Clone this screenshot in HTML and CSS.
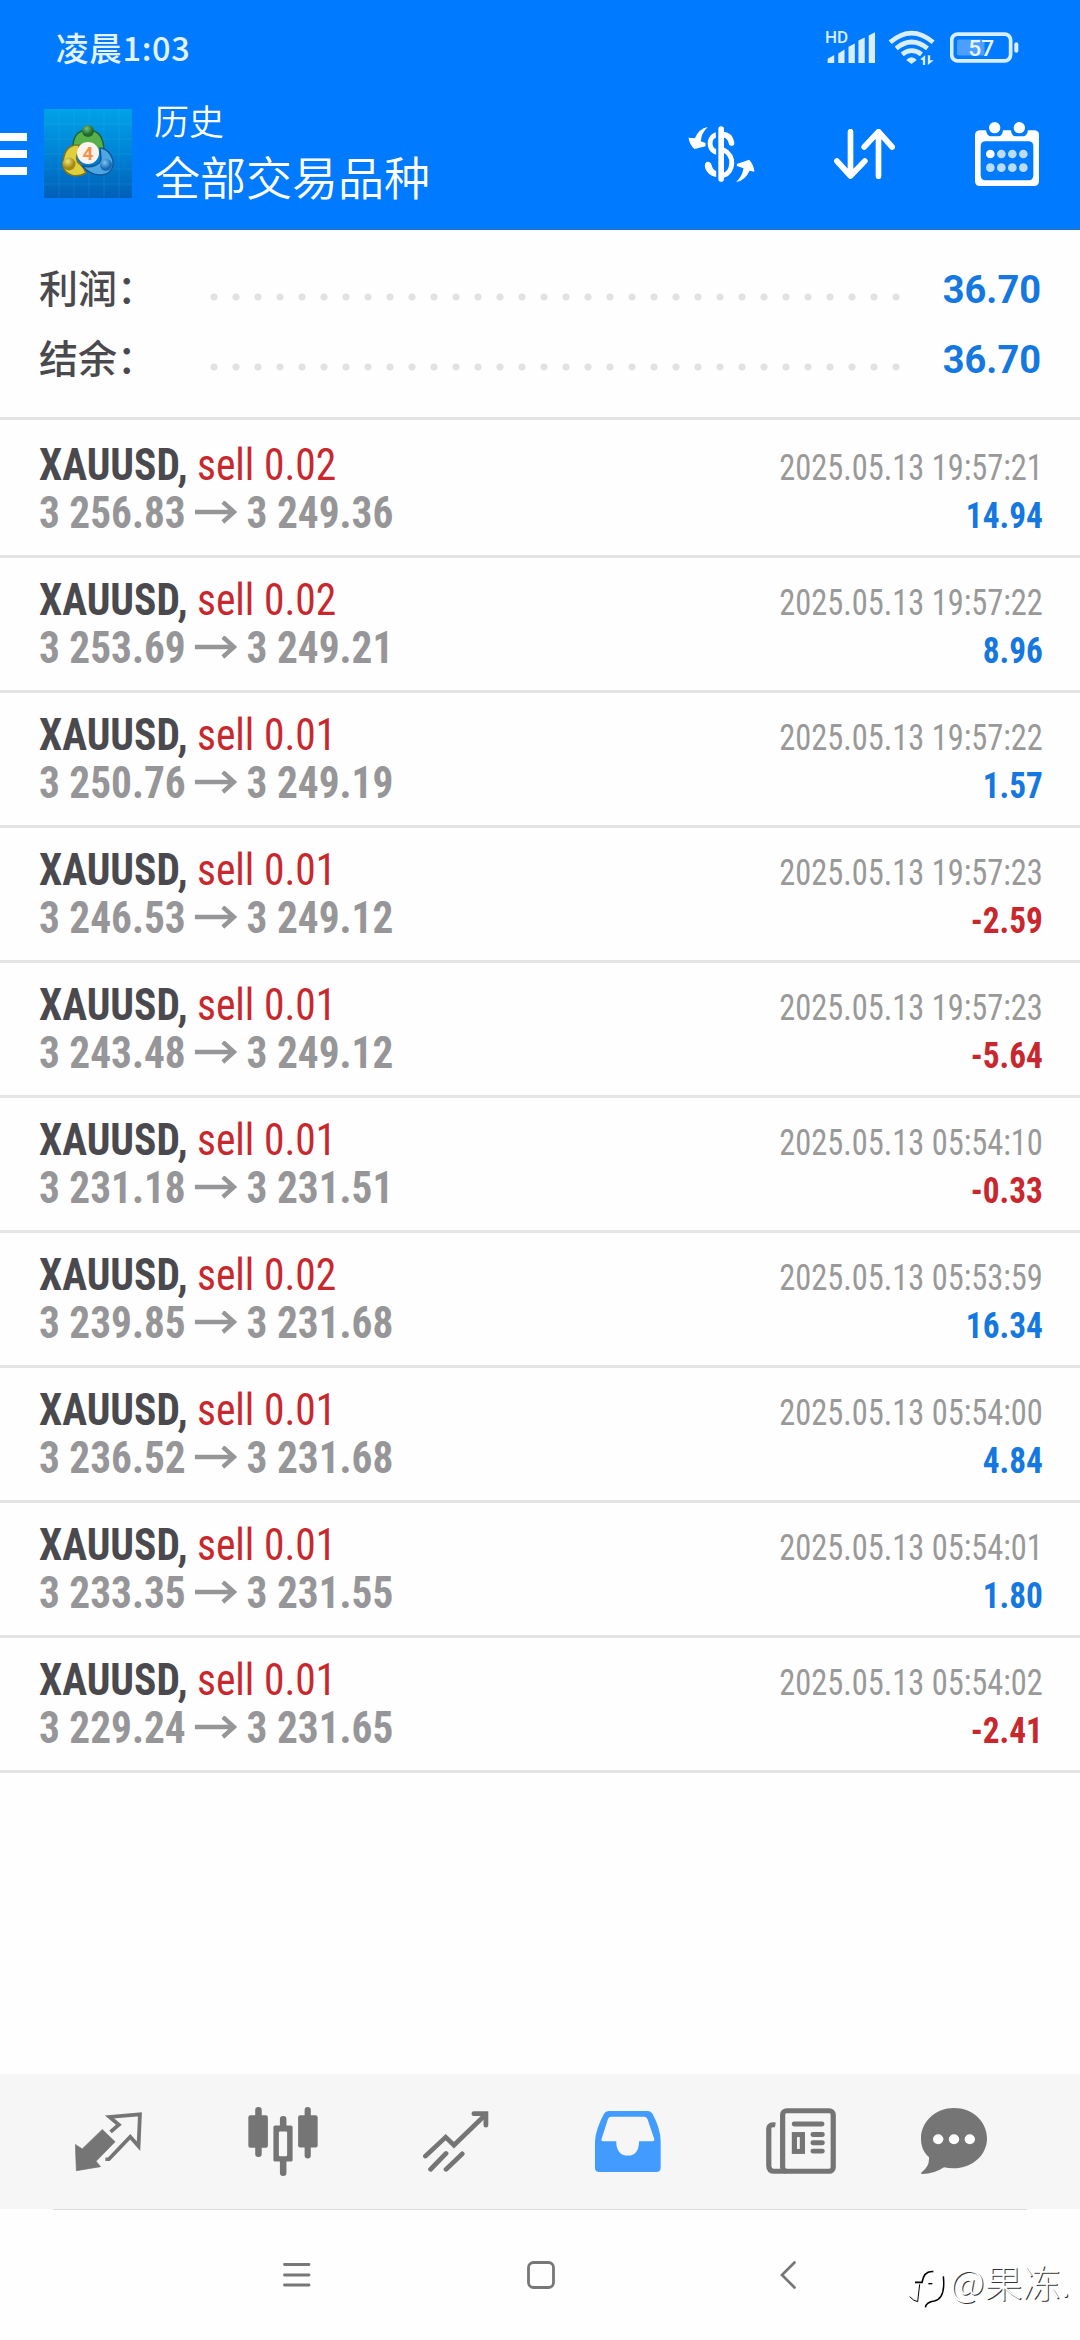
FILE: index.html
```
<!DOCTYPE html>
<html lang="zh-CN">
<head>
<meta charset="utf-8">
<title>历史</title>
<link rel="stylesheet" href="styles.css">
</head>
<body>
<div class="screen">
<header class="header">
  <div class="status">
    <span class="clock">凌晨1:03</span>
    <svg class="signal" viewBox="554 72 154 140" width="51" height="47">
      <text x="554" y="129" font-size="48" font-weight="500" textLength="70" lengthAdjust="spacingAndGlyphs" fill="#d9eeff">HD</text>
      <g fill="#d9eeff"><path d="M562 189V176L582 165V189Z"/><path d="M594 189V160L613 148V189Z"/><path d="M625 189V140L644 130V189Z"/><path d="M655 189V121L674 112V189Z"/><path d="M686 189V106L705 96V189Z"/></g>
    </svg>
    <svg class="wifi" viewBox="742 90 140 108" width="47" height="36">
      <g fill="none" stroke="#d9eeff" stroke-width="14"><path d="M748 127Q812 72 877 127"/><path d="M766 145Q812 107 860 145"/><path d="M784 163Q812 141 842 163"/></g>
      <path d="M796 180Q812 164 828 180L812 192Z" fill="#d9eeff"/>
      <path d="M838 178L853 166V195H846V181ZM861 166H868V181H879L861 195Z" fill="#d9eeff"/>
    </svg>
    <svg class="battery" viewBox="927 95 206 92" width="69" height="31">
      <rect x="932" y="101" width="176" height="80" rx="18" fill="none" stroke="#d9eeff" stroke-width="11"/>
      <rect x="948" y="117" width="82" height="48" rx="6" fill="#4d9fff"/>
      <rect x="1119" y="125" width="12" height="32" rx="6" fill="#d9eeff"/>
      <text x="1020" y="166" font-size="68" font-weight="500" text-anchor="middle" fill="#e9f6ff">57</text>
    </svg>
  </div>
  <div class="appbar">
    <svg class="menu" viewBox="0 0 28 42" width="28" height="42"><path d="M0 0H27V8H0ZM0 17H27V25H0ZM0 34H27V42H0Z" fill="#fff"/></svg>
    <svg class="logo" viewBox="0 0 88 89" width="88" height="89">
      <defs>
        <linearGradient id="sky" x1="0" y1="0" x2="0" y2="1"><stop offset="0" stop-color="#00a2e8"/><stop offset=".5" stop-color="#0083d6"/><stop offset="1" stop-color="#005fb8"/></linearGradient>
        <radialGradient id="gr" cx=".4" cy=".3"><stop offset="0" stop-color="#7cc070"/><stop offset="1" stop-color="#1d6b2c"/></radialGradient>
        <radialGradient id="ye" cx=".4" cy=".3"><stop offset="0" stop-color="#f0e77a"/><stop offset="1" stop-color="#a58a12"/></radialGradient>
        <radialGradient id="bl" cx=".4" cy=".3"><stop offset="0" stop-color="#7cc6f2"/><stop offset="1" stop-color="#1a6cb5"/></radialGradient>
      </defs>
      <rect width="88" height="89" fill="url(#sky)"/>
      <path d="M15 0V89M30 0V89M45 0V89M60 0V89M75 0V89M0 15H88M0 30H88M0 45H88M0 60H88M0 75H88" stroke="#48b8f0" stroke-opacity=".16"/>
      <path d="M29 42C28 27 34 21 44 21C55 21 60 29 60 43L51 42C49 35 39 35 38 42Z" fill="#58b04a" stroke="#1c6436" stroke-width="1.5"/>
      <path d="M35 36C22 35 19 46 19 57C21 67 33 69 42 64L38 56C32 54 31 47 35 43Z" fill="#dfcf3d" stroke="#7c7520" stroke-width="1.5"/>
      <path d="M56 39C65 40 70 49 69 56C67 68 50 70 38 57C48 59 56 56 57 50Z" fill="#4ca7e2" stroke="#135797" stroke-width="1.5"/>
      <circle cx="44" cy="22" r="6" fill="url(#gr)"/><circle cx="25" cy="55" r="6.5" fill="url(#ye)"/><circle cx="62" cy="56" r="6" fill="url(#bl)"/>
      <circle cx="44" cy="44" r="11" fill="#fbf3ee"/>
      <text x="44" y="51" text-anchor="middle" font-size="19" font-weight="700" fill="#f1924a">4</text>
    </svg>
    <div class="titles"><div class="title">历史</div><div class="subtitle">全部交易品种</div></div>
    <svg class="act dollar" viewBox="26 29 200 168" width="67" height="56">
      <g fill="none" stroke="#fff" stroke-linecap="round"><path d="M125 38V188" stroke-width="17"/><path d="M132 55C146 56 153 64 156 80" stroke-width="17"/><path d="M132 101C168 116 162 168 132 177" stroke-width="15"/></g>
      <path d="M109 48C76 57 77 108 110 115V98C95 93 96 68 109 64ZM80 138C84 134 94 137 96 145C98 154 102 161 110 164V182C92 180 79 168 76 150Q75 142 80 138Z" fill="#fff"/>
      <path d="M85 32Q65 50 64 75L78 80V90L45 98Q30 85 27 64L46 66Q58 37 85 32ZM170 197Q189 179 192 156L172 149V143L209 130Q223 145 225 166L210 163Q198 192 170 197Z" fill="#fff"/>
    </svg>
    <svg class="act sort" viewBox="584 384 182 150" width="61" height="50">
      <path d="M633 392V524M592 480L633 525L676 480M717 526V394M674 438L717 392L758 438" fill="none" stroke="#fff" stroke-width="17" stroke-linecap="round" stroke-linejoin="round"/>
    </svg>
    <svg class="act cal" viewBox="1004 359 192 192" width="64" height="64">
      <path fill-rule="evenodd" fill="#fff" d="M1020 384H1037Q1040 402 1052 402H1074Q1086 402 1088 384H1112Q1114 402 1126 402H1148Q1160 402 1163 384H1181Q1196 384 1196 398V536Q1196 551 1181 551H1019Q1004 551 1004 536V398Q1004 384 1020 384ZM1036 417Q1021 417 1021 432V519Q1021 534 1036 534H1164Q1179 534 1179 519V432Q1179 417 1164 417Z"/>
      <circle cx="1063" cy="376" r="17" fill="#fff"/><circle cx="1137" cy="376" r="17" fill="#fff"/>
      <circle cx="1050" cy="455" r="13" fill="#fff"/>
      <g fill="#b9dcff"><circle cx="1083" cy="455" r="13"/><circle cx="1116" cy="455" r="13"/><circle cx="1149" cy="455" r="13"/><circle cx="1050" cy="496" r="13"/><circle cx="1083" cy="496" r="13"/><circle cx="1116" cy="496" r="13"/><circle cx="1149" cy="496" r="13"/></g>
    </svg>
  </div>
</header>
<section class="summary">
  <div class="sum"><span class="label">利润：</span><span class="dots"></span><b>36.70</b></div>
  <div class="sum"><span class="label">结余：</span><span class="dots"></span><b>36.70</b></div>
</section>
<main class="deals" id="deals"></main>
<nav class="tabs">
  <svg viewBox="218 158 194 176" preserveAspectRatio="none" width="67" height="59">
    <path d="M297 210L334 247L279 305L292 321L222 333L219 255L239 268Z" fill="#757575" stroke="#757575" stroke-width="2" stroke-linejoin="round"/>
    <path d="M321 217L345 196L318 173L406 165L402 260L378 232L316 299H306" fill="none" stroke="#757575" stroke-width="11"/>
  </svg>
  <svg viewBox="714 143 204 206" preserveAspectRatio="none" width="70" height="69">
    <g fill="#757575"><rect x="715" y="168" width="57" height="97" rx="6"/><rect x="860" y="168" width="57" height="96" rx="6"/><rect x="735" y="143" width="19" height="149" rx="9"/><rect x="879" y="143" width="18" height="154" rx="9"/><rect x="807" y="170" width="19" height="179" rx="9"/><rect x="788" y="198" width="56" height="108" rx="5"/></g>
    <rect x="804" y="216" width="24" height="74" rx="3" fill="#f6f6f6"/>
  </svg>
  <svg viewBox="1223 151 192 184" preserveAspectRatio="none" width="66" height="61">
    <g fill="none" stroke="#757575" stroke-width="14" stroke-linecap="round"><path d="M1230 287L1289 230L1313 254L1405 162"/><path d="M1371 159H1406V194"/><path d="M1245 327L1290 279M1290 327L1337 280"/></g>
  </svg>
  <svg viewBox="158 152 193 182" preserveAspectRatio="none" width="66" height="61">
    <path fill-rule="evenodd" fill="#429cff" d="M198 152H312Q321 152 327 162Q350 207 350 242V321Q350 334 337 334H171Q158 334 158 321V242Q160 206 184 161Q189 152 198 152ZM205 169Q199 169 196 176L177 236Q176 242 184 242H220Q221 285 254 285Q286 285 287 242H327Q333 242 331 235L312 177Q309 169 302 169Z"/>
  </svg>
  <svg viewBox="657 143 202 199" preserveAspectRatio="none" width="70" height="66">
    <g fill="none" stroke="#757575" stroke-width="15"><rect x="705" y="151" width="146" height="183" rx="12"/><path d="M684 194Q665 191 665 207V316Q665 334 682 334H715"/><rect x="739" y="223" width="23" height="51"/><path d="M739 191H818M793 223H819M793 248H819M793 273H819" stroke-linecap="round"/></g>
  </svg>
  <svg class="chat" viewBox="1103 143 192 199" preserveAspectRatio="none" width="66" height="66">
    <path fill="#757575" d="M1199 143C1252 143 1295 183 1295 235C1295 292 1239 337 1170 322Q1142 342 1106 342Q1101 341 1105 337Q1129 318 1126 291C1110 276 1103 259 1103 235C1103 183 1147 143 1199 143Z"/>
    <g fill="#fff"><circle cx="1153" cy="237" r="15"/><circle cx="1199" cy="237" r="15"/><circle cx="1245" cy="237" r="15"/></g>
  </svg>
</nav>
<footer class="navbar">
  <svg class="n1" width="28" height="24" viewBox="0 0 28 24"><path d="M1.5 1.5H26M1.5 12H26M1.5 22H26" stroke="#777" stroke-width="2.8" stroke-linecap="round"/></svg>
  <svg class="n2" width="28" height="28" viewBox="0 0 28 28"><rect x="1.5" y="1.5" width="25" height="25" rx="5" fill="none" stroke="#777" stroke-width="2.8"/></svg>
  <svg class="n3" width="16" height="28" viewBox="0 0 16 28"><path d="M14.5 1.5L2 14L14.5 26.5" fill="none" stroke="#777" stroke-width="2.7" stroke-linecap="round"/></svg>
</footer>
<div class="mark">
  <svg width="36" height="40" viewBox="28 60 108 120"><g fill="none" stroke="#000"><path d="M101 68C81 65 71 78 67 100H46" stroke-width="5"/><path d="M60 106L54 158Q42 156 30 143" stroke-width="3"/><path d="M86 104H98" stroke-width="4"/><path d="M131 82C135 120 131 150 104 156Q80 159 77 175" stroke-width="4.5"/></g></svg><span>@果冻.</span>
</div>
</div>
<script src="deals.js"></script>
</body>
</html>
```
FILE: styles.css
```
* { box-sizing: border-box; }
body { margin: 0; background: #fefefe; font-family: Roboto, "Noto Sans CJK SC", sans-serif; }
svg { display: block; flex: none; }
.screen { position: relative; width: 1080px; height: 2340px; display: flex; flex-direction: column; overflow: hidden; }
.header { height: 230px; flex: none; background: #007aff; color: #fff; border-bottom: 1px solid #2a6fbd; }
.status { height: 95px; display: flex; align-items: center; padding: 0 61px 0 56px; color: #e2f3ff; }
.clock { flex: 1; font: 500 32.5px/40px "Noto Sans CJK SC", sans-serif; letter-spacing: 0.7px; padding-bottom: 2px; }
.wifi { margin-left: 12px; }
.battery { margin-left: 15px; }
.appbar { height: 117px; display: flex; align-items: center; }
.logo { margin-left: 16px; }
.titles { flex: 1; margin-left: 22px; padding-bottom: 7px; font-family: "Noto Sans CJK SC", sans-serif; font-weight: 350; }
.title { font-size: 35px; line-height: 50px; }
.subtitle { font-size: 46px; line-height: 60px; }
.sort { margin-left: 79px; }
.cal { margin-left: 80px; margin-right: 41px; }
.summary { flex: none; height: 190px; padding: 24px 39px 0 39px; border-bottom: 3px solid #e4e4e4; }
.sum { height: 70px; display: flex; align-items: center; justify-content: space-between; }
.label { width: 171px; padding-bottom: 7px; font: 500 39px/60px "Noto Sans CJK SC", sans-serif; color: #4a4a4e; }
.dots { width: 705px; height: 22px; margin-top: 15px; margin-right: auto; margin-left: -7px; background: radial-gradient(circle, #e2e2e2 3.2px, transparent 4px) 0 0 / 22.01px 22px; }
.sum b { font-size: 38px; padding-top: 1px; color: #1478e0; }
.deals { flex: 1; font-family: "Roboto Condensed", Roboto, sans-serif; font-stretch: 75%; }
.deal { height: 135px; display: flex; justify-content: space-between; padding: 18px 37px 0 39px; border-bottom: 3px solid #e4e4e4; white-space: nowrap; }
.deal:first-child { height: 138px; padding-top: 21px; }
.line { height: 48px; line-height: 48px; display: flex; align-items: center; transform-origin: left; }
.name { font-size: 44px; color: #c8282d; transform: scaleX(0.943); }
.name b { color: #4a4a4e; margin-right: 10px; }
.price { font-size: 44px; font-weight: 700; color: #969698; gap: 10px; transform: scaleX(0.938); }
.right { text-align: right; padding-top: 3px; }
.right .line { justify-content: flex-end; transform-origin: right; }
.date { font-size: 36px; color: #999; transform: scaleX(0.9); }
.profit { font-size: 36px; font-weight: 700; color: #1478e0; transform: scaleX(0.925); }
.loss { color: #c8282d; }
.tabs { flex: none; height: 135px; background: #f6f6f6; display: flex; align-items: center; gap: 105.6px; padding: 0 0 1px 75px; }
.chat { margin-left: -21px; }
.navbar { flex: none; height: 131px; position: relative; display: flex; align-items: center; padding-left: 283px; }
.navbar::before { content: ""; position: absolute; top: 0; left: 53px; right: 53px; height: 1px; background: #ddd; }
.n2 { margin-left: 216px; }
.n3 { margin-left: 225px; }
.mark { position: absolute; left: 909px; top: 2252px; display: flex; align-items: center; white-space: nowrap; font: 300 38px/44px "Noto Sans CJK SC", sans-serif; color: #fff; text-shadow: 1px 1px 0 #333; }
.mark svg { margin-top: 17px; }
.mark span { margin-left: 5px; }
```
FILE: deals.js
```
const deals = [
  ["0.02", "3 256.83", "3 249.36", "2025.05.13 19:57:21", "14.94"],
  ["0.02", "3 253.69", "3 249.21", "2025.05.13 19:57:22", "8.96"],
  ["0.01", "3 250.76", "3 249.19", "2025.05.13 19:57:22", "1.57"],
  ["0.01", "3 246.53", "3 249.12", "2025.05.13 19:57:23", "-2.59"],
  ["0.01", "3 243.48", "3 249.12", "2025.05.13 19:57:23", "-5.64"],
  ["0.01", "3 231.18", "3 231.51", "2025.05.13 05:54:10", "-0.33"],
  ["0.02", "3 239.85", "3 231.68", "2025.05.13 05:53:59", "16.34"],
  ["0.01", "3 236.52", "3 231.68", "2025.05.13 05:54:00", "4.84"],
  ["0.01", "3 233.35", "3 231.55", "2025.05.13 05:54:01", "1.80"],
  ["0.01", "3 229.24", "3 231.65", "2025.05.13 05:54:02", "-2.41"]
];
const arrow = '<svg width="45" height="24" viewBox="0 0 45 24"><path d="M0 11H42M30 1L42 11L30 21" fill="none" stroke="#969698" stroke-width="4.5"/></svg>';
document.getElementById("deals").innerHTML = deals.map(([lots, from, to, date, profit]) => `
  <div class="deal">
    <div><div class="line name"><b>XAUUSD,</b><span>sell ${lots}</span></div>
    <div class="line price"><span>${from}</span>${arrow}<span>${to}</span></div></div>
    <div class="right"><div class="line date">${date}</div>
    <div class="line profit${profit.startsWith("-") ? " loss" : ""}">${profit}</div></div>
  </div>`).join("");
```
